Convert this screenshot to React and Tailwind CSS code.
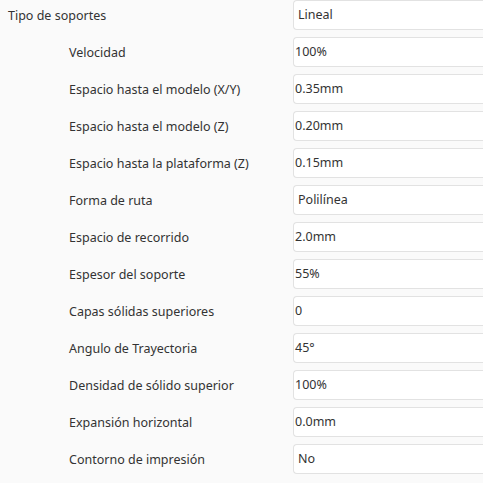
import React from "react";

const rows = [
  { label: "Tipo de soportes", value: "Lineal", top: true, select: true },
  { label: "Velocidad", value: "100%" },
  { label: "Espacio hasta el modelo (X/Y)", value: "0.35mm" },
  { label: "Espacio hasta el modelo (Z)", value: "0.20mm" },
  { label: "Espacio hasta la plataforma (Z)", value: "0.15mm" },
  { label: "Forma de ruta", value: "Polilínea", select: true },
  { label: "Espacio de recorrido", value: "2.0mm" },
  { label: "Espesor del soporte", value: "55%" },
  { label: "Capas sólidas superiores", value: "0" },
  { label: "Angulo de Trayectoria", value: "45°" },
  { label: "Densidad de sólido superior", value: "100%" },
  { label: "Expansión horizontal", value: "0.0mm" },
  { label: "Contorno de impresión", value: "No", select: true },
];

export default function App() {
  return (
    <div
      className="w-[483px] h-[483px] overflow-hidden bg-[#fafafa] text-[#333] text-[12.5px]"
      style={{ fontFamily: '"Noto Sans", "Open Sans", sans-serif' }}
    >
      <div className="flex flex-col gap-[7px]">
        {rows.map((r, i) => (
          <div key={i} className="flex items-center h-[30px]">
            <div className={`w-[293px] shrink-0 pt-[2px] ${r.top ? "pl-[8px]" : "pl-[69px]"}`}>
              {r.label}
            </div>
            <div
              className={`flex-1 h-[30px] flex items-center pt-[1px] bg-white border border-[#e2e2e2] rounded-l-[4px] border-r-0 ${
                r.select ? "pl-[4px]" : "pl-[1px]"
              }`}
            >
              {r.value}
            </div>
          </div>
        ))}
      </div>
    </div>
  );
}
